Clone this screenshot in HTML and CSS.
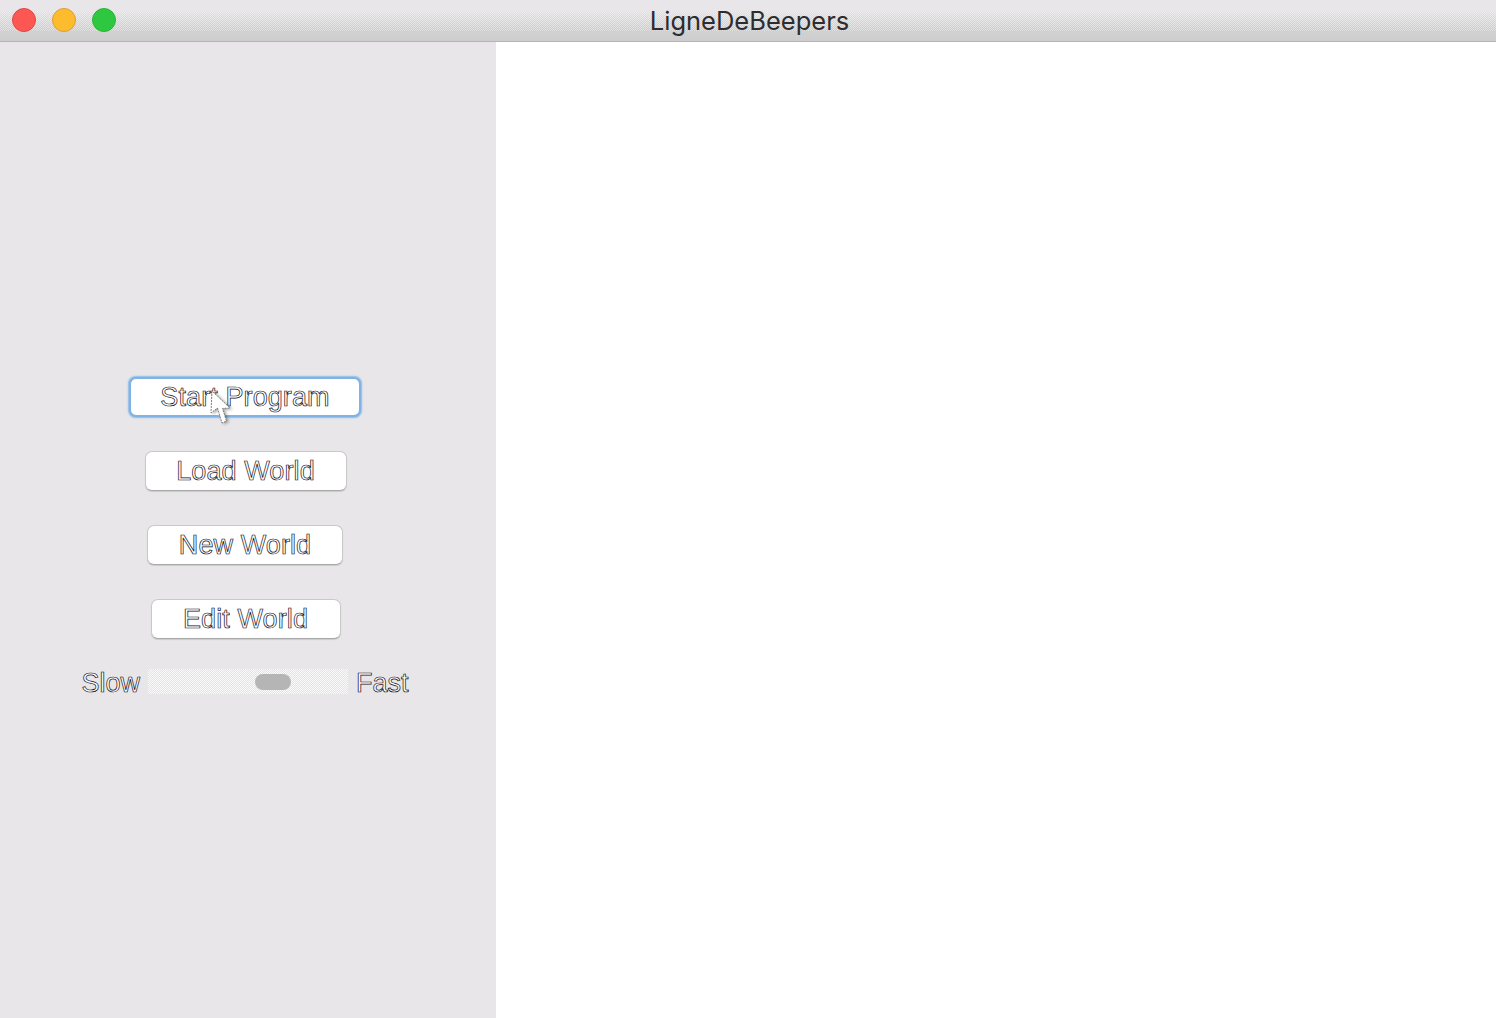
FILE: index.html

```html
<!DOCTYPE html>
<html lang="fr">
<head>
  <meta charset="UTF-8">
  <title>LigneDeBeepers</title>
  <link rel="stylesheet" href="styles.css">
</head>
<body>
  <div class="titlebar">
    <div class="lights">
      <span class="light red"></span>
      <span class="light yellow"></span>
      <span class="light green"></span>
    </div>
    <div class="title">LigneDeBeepers</div>
  </div>
  <div class="window">
    <div class="sidebar">
      <div class="start-wrap">
        <button class="btn btn-start">Start Program</button>
        <svg class="cursor" width="30" height="40" viewBox="0 0 30 40">
          <path d="M3 1 L2 23 L8.5 18 L13 33 L17.5 31 L13.5 18.5 L21 18 Z" fill="#fff" stroke="#555" stroke-width="0.7" stroke-dasharray="2 1"/>
        </svg>
      </div>
      <button class="btn btn-load">Load World</button>
      <button class="btn btn-new">New World</button>
      <button class="btn btn-edit">Edit World</button>
      <div class="speed">
        <span class="speed-label">Slow</span>
        <div class="slider"><div class="thumb"></div></div>
        <span class="speed-label">Fast</span>
      </div>
    </div>
    <div class="canvas"></div>
  </div>
</body>
</html>
```

FILE: styles.css

```css
html, body {
  margin: 0;
  height: 100%;
  overflow: hidden;
}
body {
  font-family: "Liberation Sans", Arial, sans-serif;
  background-color: #fff;
  display: flex;
  flex-direction: column;
}
.titlebar {
  height: 41px;
  flex-shrink: 0;
  display: flex;
  align-items: center;
  justify-content: center;
  position: relative;
  background: linear-gradient(#e8e6e8 0, #e8e6e8 11px, #d2d2d2 30px, #cdcdcd 100%);
  border-bottom: 1px solid #b4b4b4;
}
/* dotted band where the bar's gradient starts */
.titlebar::before {
  content: "";
  position: absolute;
  left: 0;
  right: 0;
  top: 11px;
  height: 20px;
  background: repeating-conic-gradient(rgba(255, 255, 255, 0.35) 0 25%, rgba(0, 0, 0, 0.03) 0 50%) 0 0 / 2px 2px;
}
.lights {
  position: absolute;
  left: 12px;
  top: 8px;
  display: flex;
  gap: 16px;
}
.light {
  width: 24px;
  height: 24px;
  border-radius: 50%;
  box-sizing: border-box;
}
.red {
  background-color: #fc5753;
  border: 1px solid #df4744;
}
.yellow {
  background-color: #fdbc2e;
  border: 1px solid #de9f34;
}
.green {
  background-color: #2dc840;
  border: 1px solid #28b536;
}
.title {
  font-family: "Inter", "Liberation Sans", sans-serif;
  font-size: 25.5px;
  color: #2e2c2e;
  margin-left: 3px;
  position: relative;
}
.window {
  flex: 1;
  display: flex;
  min-height: 0;
}
.sidebar {
  width: 496px;
  flex-shrink: 0;
  background-color: #e8e6e8;
  display: flex;
  flex-direction: column;
  align-items: center;
  padding: 335px 6px 0 0;
  box-sizing: border-box;
}
.canvas {
  flex: 1;
  background-color: #fff;
}
.btn {
  display: block;
  height: 40px;
  box-sizing: border-box;
  padding: 0;
  background-color: #fff;
  border: 1px solid #c9c9c9;
  border-bottom-color: #a8a8a8;
  border-radius: 7px;
  box-shadow: 0 1px 1px rgba(0, 0, 0, 0.12);
  font-family: "Liberation Sans", Arial, sans-serif;
  font-size: 27px;
  letter-spacing: 0.1px;
  color: #fff;
  -webkit-text-stroke: 0.7px #0c0c18;
  margin-bottom: 34px;
}
.start-wrap {
  position: relative;
  height: 40px;
  margin-bottom: 34px;
}
.btn-start {
  width: 232px;
  border: 2px solid #7fb3e6;
  box-shadow: 0 0 1.5px 0.5px #8dbbe8;
  margin: 0;
}
.cursor {
  position: absolute;
  left: 80px;
  top: 13px;
  filter: drop-shadow(2px 1px 1.5px rgba(0, 0, 0, 0.35));
}
.btn-load {
  width: 202px;
  margin-left: 1px;
}
.btn-new {
  width: 196px;
}
.btn-edit {
  width: 190px;
  margin-left: 1px;
  margin-bottom: 29px;
}
.speed {
  display: flex;
  align-items: center;
  gap: 8px;
  height: 26px;
}
.speed-label {
  font-size: 27px;
  color: #fff;
  -webkit-text-stroke: 0.7px #0c0c18;
  position: relative;
  top: 2px;
}
.slider {
  width: 200px;
  height: 25px;
  margin-top: 1px;
  background: repeating-conic-gradient(#fafafa 0 25%, #e4e3e4 0 50%) 0 0 / 2px 2px;
  display: flex;
  align-items: center;
  padding-left: 107px;
  box-sizing: border-box;
}
.thumb {
  width: 36px;
  height: 16px;
  border-radius: 8px;
  background-color: #b5b5b5;
}
```
